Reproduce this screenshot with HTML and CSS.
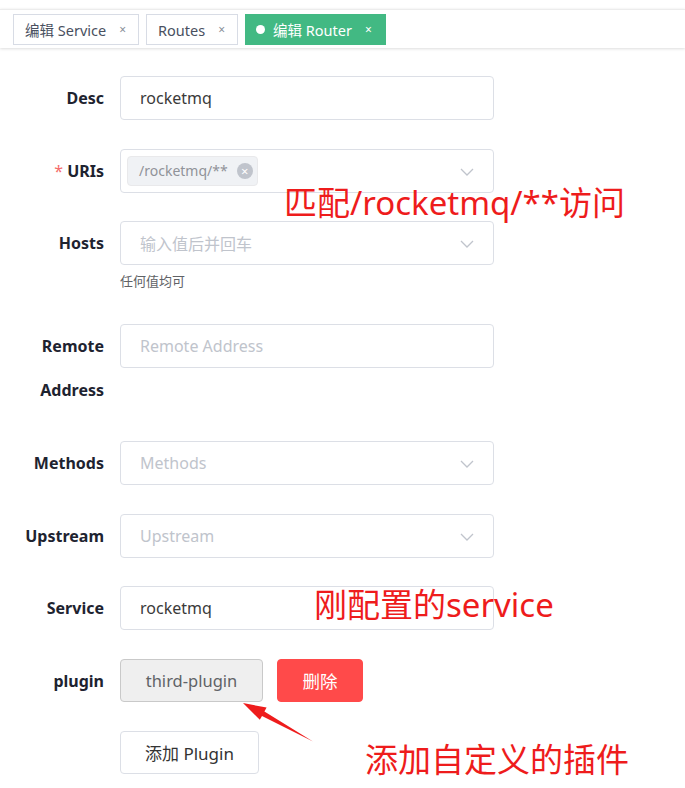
FILE: index.html
```html
<!DOCTYPE html>
<html lang="zh-CN">
<head>
<meta charset="utf-8">
<title>编辑 Router</title>
<link rel="stylesheet" href="styles.css">
</head>
<body>
<div class="page">
  <div class="tabbar">
    <div class="tab">编辑 Service<span class="x">×</span></div>
    <div class="tab">Routes<span class="x">×</span></div>
    <div class="tab active"><span class="dot"></span>编辑 Router<span class="x">×</span></div>
  </div>

  <form class="form">
    <div class="item">
      <label class="label">Desc</label>
      <div class="control"><div class="input">rocketmq</div></div>
    </div>
    <div class="item">
      <label class="label"><span class="req">*</span> URIs</label>
      <div class="control">
        <div class="input select tags">
          <span class="tag">/rocketmq/**<span class="tag-close">×</span></span>
          <svg class="chev" width="14" height="8" viewBox="0 0 14 8"><polyline points="1,1 7,7 13,1" fill="none" stroke="#c0c4cc" stroke-width="1.3"/></svg>
        </div>
      </div>
    </div>
    <div class="item help-item">
      <label class="label">Hosts</label>
      <div class="control">
        <div class="input select"><span class="ph">输入值后并回车</span>
          <svg class="chev" width="14" height="8" viewBox="0 0 14 8"><polyline points="1,1 7,7 13,1" fill="none" stroke="#c0c4cc" stroke-width="1.3"/></svg>
        </div>
        <div class="help">任何值均可</div>
      </div>
    </div>
    <div class="item">
      <label class="label two">Remote Address</label>
      <div class="control"><div class="input"><span class="ph">Remote Address</span></div></div>
    </div>
    <div class="item">
      <label class="label">Methods</label>
      <div class="control">
        <div class="input select"><span class="ph">Methods</span>
          <svg class="chev" width="14" height="8" viewBox="0 0 14 8"><polyline points="1,1 7,7 13,1" fill="none" stroke="#c0c4cc" stroke-width="1.3"/></svg>
        </div>
      </div>
    </div>
    <div class="item">
      <label class="label">Upstream</label>
      <div class="control">
        <div class="input select"><span class="ph">Upstream</span>
          <svg class="chev" width="14" height="8" viewBox="0 0 14 8"><polyline points="1,1 7,7 13,1" fill="none" stroke="#c0c4cc" stroke-width="1.3"/></svg>
        </div>
      </div>
    </div>
    <div class="item">
      <label class="label">Service</label>
      <div class="control"><div class="input">rocketmq</div></div>
    </div>
    <div class="item">
      <label class="label">plugin</label>
      <div class="control row">
        <button type="button" class="btn plugin">third-plugin</button>
        <button type="button" class="btn danger">删除</button>
      </div>
    </div>
    <div class="item">
      <div class="label"></div>
      <div class="control"><button type="button" class="btn add">添加 Plugin</button></div>
    </div>
  </form>

  <div class="note n1">匹配/rocketmq/**访问</div>
  <div class="note n2">刚配置的service</div>
  <div class="note n3">添加自定义的插件</div>
  <svg class="arrow" width="685" height="788" viewBox="0 0 685 788">
    <polygon points="243,703 266.6,707.6 264.4,711.5 313,741.5 262,715.9 259.8,719.8" fill="#ee1c1c"/>
  </svg>
</div>
</body>
</html>
```

FILE: styles.css
```css
* { box-sizing: border-box; }
html, body { margin: 0; padding: 0; background: #fff; }
body {
  font-family: "Noto Sans", "Noto Sans CJK SC", sans-serif;
  color: #303133;
}
.page {
  position: relative;
  width: 685px;
  height: 788px;
  overflow: hidden;
  padding-top: 9px;
}
.tabbar {
  height: 39px;
  border-top: 1px solid #ececec;
  display: flex;
  align-items: flex-start;
  gap: 7px;
  padding: 4px 0 0 13px;
  box-shadow: 0 1px 3px rgba(0,0,0,0.12), 0 0 3px rgba(0,0,0,0.04);
}
.tab {
  height: 31px;
  display: flex;
  align-items: center;
  border: 1px solid #d8dce5;
  padding: 0 12px 0 11px;
  font-size: 14.5px;
  color: #495060;
  background: #fff;
  white-space: nowrap;
}
.tab .x {
  font-size: 12px;
  color: #8a8f99;
  margin-left: 13px;
}
.tab.active {
  background: #42b983;
  border-color: #42b983;
  color: #fff;
  padding-left: 10px;
  padding-right: 13px;
}
.tab.active .x { color: #fff; margin-left: 13px; }
.dot {
  width: 9px; height: 9px;
  border-radius: 50%;
  background: #fff;
  margin-right: 8px;
}

.form {
  margin: 0;
  padding-top: 28px;
}
.item {
  display: flex;
  align-items: flex-start;
  margin-bottom: 28.5px;
}
.label {
  width: 104px;
  flex: none;
  text-align: right;
  font-size: 16px;
  font-weight: 700;
  line-height: 44px;
  color: #1e2330;
  margin-right: 16px;
}
.label.two {
  line-height: 44.5px;
  padding-left: 30px;
}
.req { color: #f56c6c; font-weight: 400; }
.control { width: 374px; }
.control.row { display: flex; gap: 14px; }
.input {
  height: 44px;
  border: 1px solid #dcdfe6;
  border-radius: 4px;
  padding: 0 19px;
  display: flex;
  align-items: center;
  font-size: 16px;
  color: #3a3a3a;
  position: relative;
}
.ph { color: #c0c4cc; }
.select .chev { position: absolute; right: 19px; top: 18px; }
.tags { padding-left: 6px; }
.tag {
  height: 30px;
  display: inline-flex;
  align-items: center;
  background: #f0f2f5;
  border: 1px solid #e9e9eb;
  border-radius: 4px;
  padding: 0 4px 0 11px;
  font-size: 14px;
  color: #909399;
}
.tag-close {
  width: 16px; height: 16px;
  border-radius: 50%;
  background: #c0c4cc;
  color: #fff;
  font-size: 13px;
  line-height: 16px;
  text-align: center;
  margin-left: 9px;
}
.help {
  margin-top: 3px;
  font-size: 13px;
  line-height: 27.5px;
  color: #606266;
}
.help-item { margin-bottom: 28px; }

.btn {
  height: 43px;
  border-radius: 4px;
  font-family: "Noto Sans", "Noto Sans CJK SC", sans-serif;
  font-size: 16.5px;
  padding: 0;
  cursor: pointer;
}
.btn.plugin {
  width: 143px;
  background: #efefef;
  border: 1px solid #c9c9c9;
  color: #606266;
}
.btn.danger {
  width: 86px;
  background: #ff4a4a;
  border: 1px solid #ff4a4a;
  color: #fff;
  font-size: 17.5px;
}
.btn.add {
  width: 139px;
  background: #fff;
  border: 1px solid #dcdfe6;
  color: #333;
  font-size: 17px;
}

.note {
  position: absolute;
  font-family: "Noto Sans", "Noto Sans CJK SC", sans-serif;
  font-size: 33px;
  line-height: 40px;
  color: #ee1c1c;
  white-space: nowrap;
}
.n1 { left: 284px; top: 183px; }
.n2 { left: 314px; top: 585px; }
.n3 { left: 365px; top: 740px; }
.arrow { position: absolute; left: 0; top: 0; pointer-events: none; }
```
